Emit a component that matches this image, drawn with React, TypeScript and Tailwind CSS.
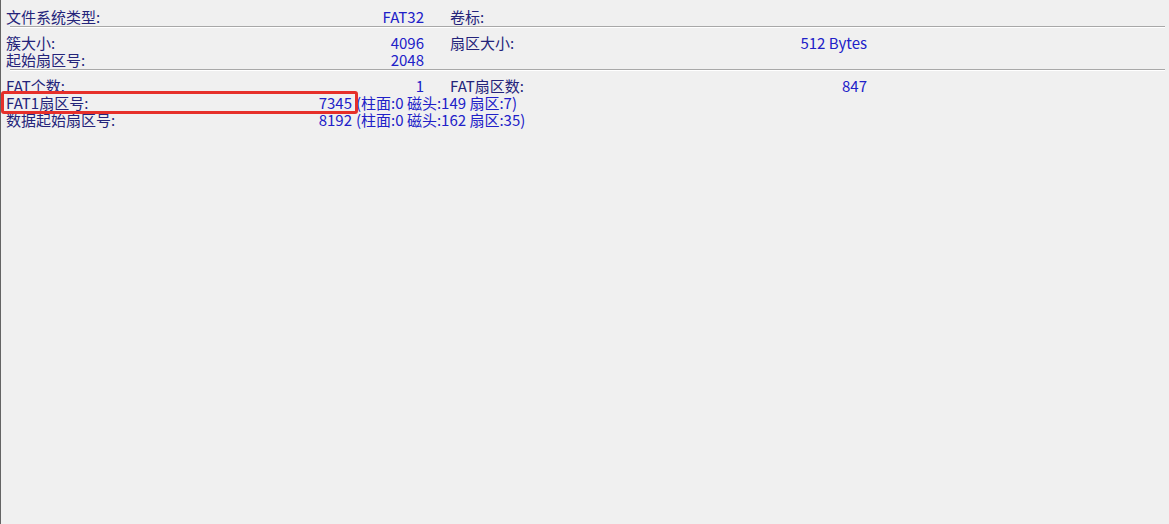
import React from 'react';

const font = { fontFamily: '"Noto Sans CJK SC", "Noto Sans", sans-serif' };

const Row: React.FC<{ label: string; value?: string; width?: string; extra?: string }> = ({
  label,
  value,
  width = 'w-[418px]',
  extra,
}) => (
  <div className="flex h-[17px] items-center">
    <div className={`${width} flex justify-between`}>
      <span className="text-[#24247a]">{label}</span>
      <span className="text-[#2020c8]">{value}</span>
    </div>
    {extra && <span className="ml-[4px] text-[#2020c8]">{extra}</span>}
  </div>
);

const Pair: React.FC<{ a: [string, string]; b?: [string, string] }> = ({ a, b }) => (
  <div className="flex h-[17px] items-center">
    <div className="w-[418px] flex justify-between">
      <span className="text-[#24247a]">{a[0]}</span>
      <span className="text-[#2020c8]">{a[1]}</span>
    </div>
    {b && (
      <div className="ml-[26px] w-[417px] flex justify-between">
        <span className="text-[#24247a]">{b[0]}</span>
        <span className="text-[#2020c8]">{b[1]}</span>
      </div>
    )}
  </div>
);

const Divider: React.FC<{ className?: string }> = ({ className }) => (
  <div className={`ml-[9px] mr-[4px] border-t border-[#a8a8a8] border-b border-b-white ${className ?? ''}`} />
);

export default function App() {
  return (
    <div
      className="relative h-screen w-full bg-[#f0f0f0] border-l border-[#646464] text-[15px] leading-[17px]"
      style={font}
    >
      <div className="pl-[5px] pt-[8px]">
        <Pair a={['文件系统类型:', 'FAT32']} b={['卷标:', '']} />
      </div>
      <Divider className="mt-[1px]" />
      <div className="pl-[5px] pt-[6px]">
        <Pair a={['簇大小:', '4096']} b={['扇区大小:', '512 Bytes']} />
        <Pair a={['起始扇区号:', '2048']} />
      </div>
      <Divider className="mt-[1px]" />
      <div className="pl-[5px] pt-[6px]">
        <Pair a={['FAT个数:', '1']} b={['FAT扇区数:', '847']} />
        <Row label="FAT1扇区号:" value="7345" width="w-[346px]" extra="(柱面:0 磁头:149 扇区:7)" />
        <Row label="数据起始扇区号:" value="8192" width="w-[346px]" extra="(柱面:0 磁头:162 扇区:35)" />
      </div>
      <div className="absolute left-0 top-[91px] h-[23px] w-[357px] rounded-[3px] border-[3px] border-[#e6302a]" />
    </div>
  );
}
